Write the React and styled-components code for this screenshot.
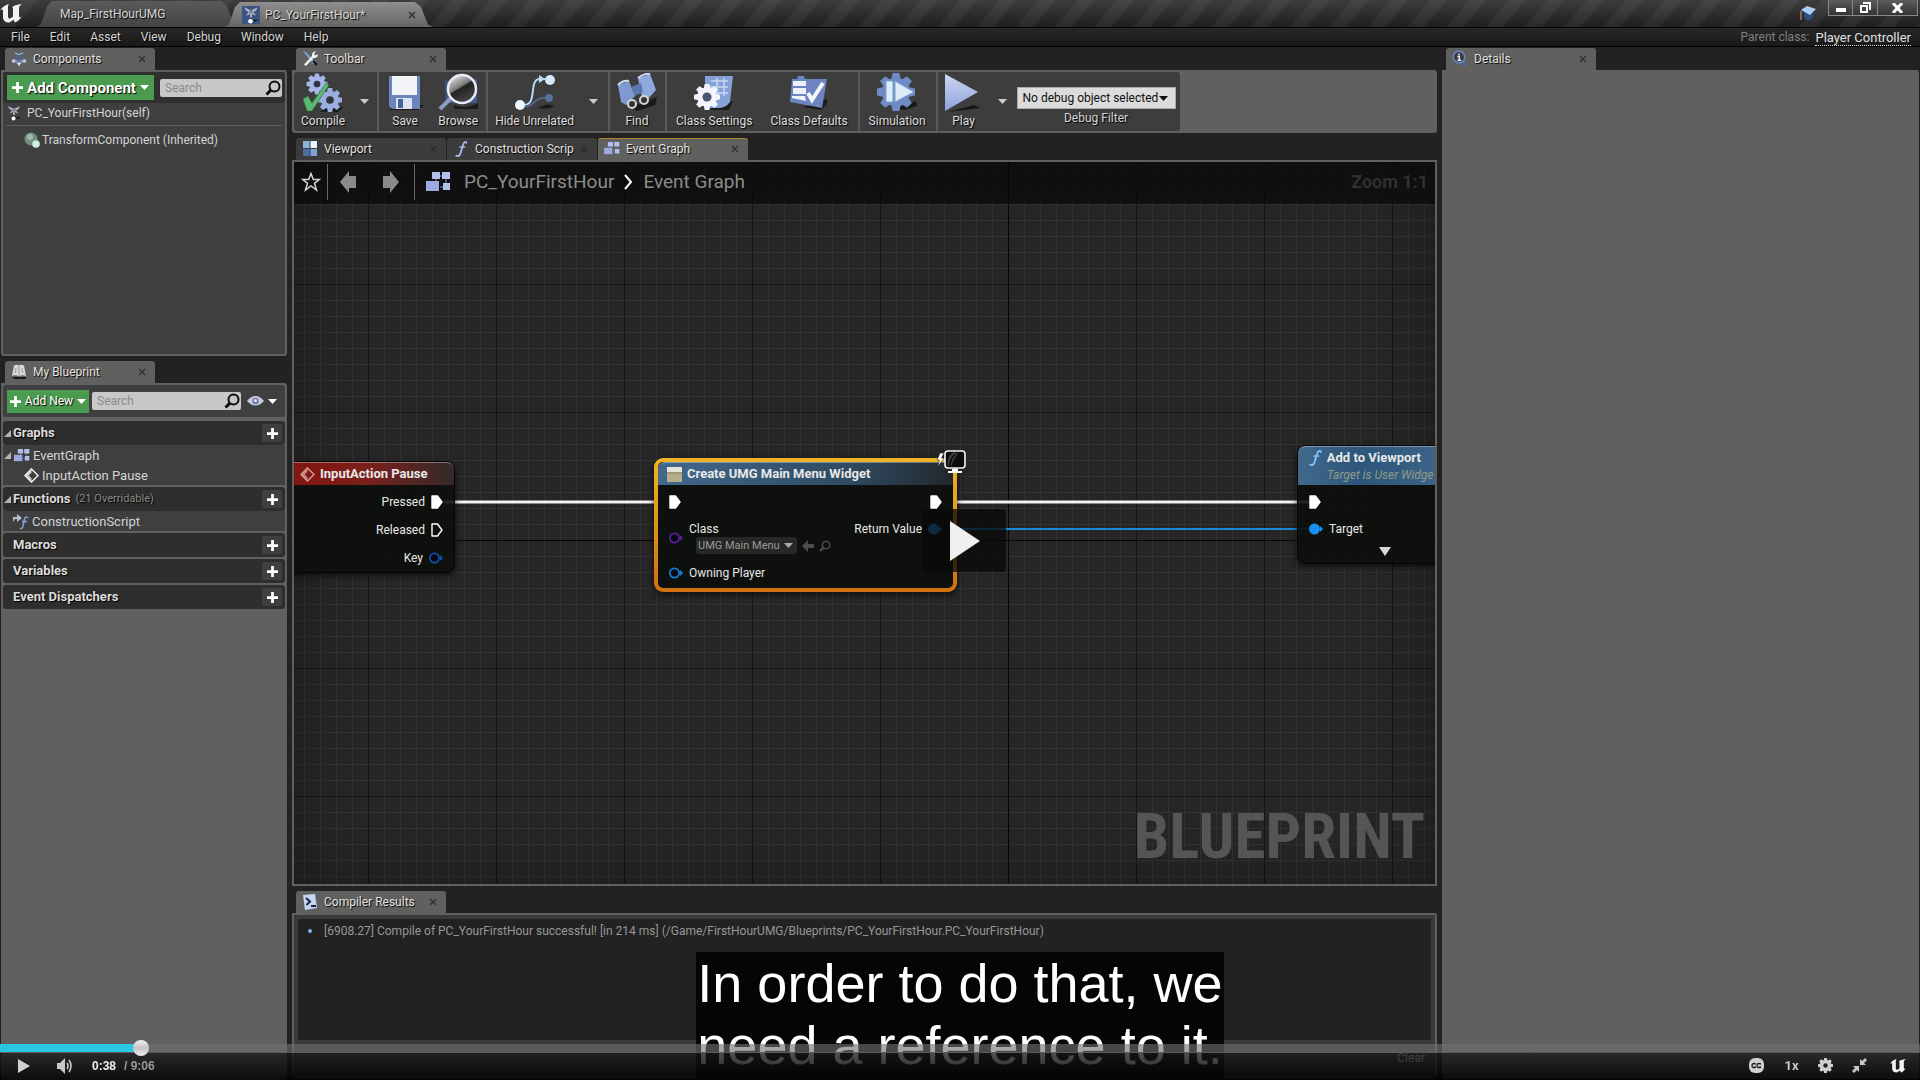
import React from "react";
import styled, { createGlobalStyle, css } from "styled-components";

const GlobalStyle = createGlobalStyle`
    * {
        box-sizing: border-box;
    }

    body {
        margin: 0;
        background: #222222;
        color: #d4d4d4;
        font-family: Roboto, "Liberation Sans", sans-serif;
        font-size: 12px;
        line-height: 16px;
        overflow: hidden;
    }

    button, input, select {
        font: inherit;
        color: inherit;
        border: none;
        padding: 0;
        background: none;
    }

    a {
        color: inherit;
    }

    svg {
        display: block;
        flex: none;
    }
`;

const Editor = styled.div`
    display: flex;
    flex-direction: column;
    height: 100vh;
`;

/* title bar */

const TitleBar = styled.header`
    display: flex;
    justify-content: space-between;
    height: 27px;
    background:
        linear-gradient(rgba(90,90,90,0.45), rgba(20,20,20,0.35)),
        repeating-linear-gradient(130deg, #242424 0 14px, #353535 17px 27px, #242424 30px);
`;

const WindowTabs = styled.nav`
    display: flex;
    align-items: flex-end;
`;

const Logo = styled.div`
    width: 37px;
    padding-bottom: 4px;
`;

const WindowTab = styled.div`
    display: flex;
    align-items: center;
    width: ${props => props.$active ? "208px" : "202px"};
    height: ${props => props.$active ? "25px" : "26px"};
    margin-left: ${props => props.$active ? "-14px" : "0"};
    padding: 0 17px 0 ${props => props.$active ? "17px" : "23px"};
    gap: 5px;
    color: #d6d6d6;
    text-shadow: 1px 1px 1px #000;
    background: ${props => props.$active
        ? "linear-gradient(#8e8e8e, #666664)"
        : "linear-gradient(#5a5a5a, #444)"};
    clip-path: polygon(0 100%, 4px 90%, 10px 20%, 15px 0, calc(100% - 18px) 0, calc(100% - 12px) 20%, calc(100% - 5px) 90%, 100% 100%);
`;

const WindowButtons = styled.div`
    display: flex;
    align-items: flex-start;
    margin-right: 2px;
`;

const Tutorial = styled.div`
    padding: 6px 12px 0 0;
`;

const WindowButton = styled.button`
    display: flex;
    align-items: center;
    justify-content: center;
    width: ${props => props.$wide ? "40px" : "25px"};
    height: 16px;
    background: linear-gradient(#5c5c5c, #333);
    border: 1px solid #8a8a8a;
    border-top: none;
    border-left-width: ${props => props.$first ? "1px" : "0"};
`;

const MenuBar = styled.nav`
    display: flex;
    align-items: center;
    height: 20px;
    padding: 0 9px 0 11px;
    border-top: 1px solid #000;
    border-bottom: 1px solid #000;
    background: linear-gradient(#272727, #191919);
    gap: 20px;
`;

const MenuItem = styled.button`
    text-shadow: 1px 1px 1px #000;
`;

const ParentClass = styled.div`
    display: flex;
    gap: 6px;
    margin-left: auto;
    color: #808080;

    a {
        color: #e0e0e0;
        text-decoration: none;
        border-bottom: 1px dotted #e0e0e0;
        font-size: 13px;
        line-height: 14px;
        margin-top: 2px;
    }
`;

/* docking layout */

const Workspace = styled.main`
    display: grid;
    grid-template-columns: 15% minmax(0, 1fr) 25%;
    flex: 1;
    min-height: 0;
`;

const Column = styled.div`
    display: flex;
    flex-direction: column;
    gap: 5px;
    min-height: 0;
    padding: ${props => props.$padding};
`;

const Dock = styled.section`
    display: flex;
    flex-direction: column;
    min-height: 0;
    flex: ${props => props.$grow ? "1" : "none"};
`;

const TabStrip = styled.div`
    display: flex;
    gap: 1px;
    height: ${props => props.$tall ? "23px" : "22px"};
    align-items: flex-end;
    padding-left: 4px;
`;

const Tab = styled.div`
    display: flex;
    align-items: center;
    width: 150px;
    height: 22px;
    padding: 0 9px 2px 6px;
    color: #e2e2e2;
    text-shadow: 1px 1px 1px #000;
    border-radius: 3px 3px 0 0;
    background: ${props => props.$idle ? "#3c3c3c" : "#60605e"};
    border-top: 1px solid ${props => props.$focused ? "#a8842c" : "transparent"};
    white-space: nowrap;
`;

const TabLabel = styled.span`
    flex: 1;
`;

const TabIcon = styled.span`
    display: flex;
    justify-content: center;
    width: 16px;
    margin-right: 6px;
`;

const Panel = styled.div`
    display: flex;
    flex-direction: column;
    flex: 1;
    min-height: ${props => props.$minHeight || "0"};
    background: ${props => props.$fill || "#60605e"};
    border: 2px solid #60605e;
    border-radius: 0 3px 3px 3px;
`;

const FilterBar = styled.div`
    display: flex;
    align-items: center;
    height: ${props => props.$height};
    gap: ${props => props.$gap};
    padding: 0 3px 0 4px;
    background: ${props => props.$fill};
    border-radius: 3px;
`;

const AddButton = styled.button`
    display: flex;
    align-items: center;
    justify-content: center;
    gap: 4px;
    flex: none;
    color: #fff;
    background: #4a9a50;
    text-shadow: 1px 1px 1px #000;
    ${props => props.$large ? css`
        width: 147px;
        height: 25px;
        font-size: 15px;
        font-weight: bold;
    ` : css`
        width: 82px;
        height: 23px;
    `}
`;

const SearchBox = styled.label`
    display: flex;
    align-items: center;
    flex: 1;
    min-width: 0;
    height: 18px;
    padding: 0 1px 0 5px;
    background: #c8c8c8;
    border-radius: 2px;

    input {
        flex: 1;
        min-width: 0;
        color: #222;
        outline: none;
    }

    input::placeholder {
        color: #8a8a8a;
        opacity: 1;
    }
`;

const ViewOptions = styled.button`
    display: flex;
    align-items: center;
    gap: 4px;
    width: 38px;
    padding-left: 3px;
`;

const ComponentRow = styled.div`
    display: flex;
    align-items: center;
    gap: ${props => props.$child ? "2px" : "5px"};
    height: ${props => props.$child ? "28px" : "23px"};
    margin: 0 3px;
    padding-left: ${props => props.$child ? "18px" : "0"};
    padding-bottom: ${props => props.$child ? "0" : "3px"};
    border-bottom: ${props => props.$child ? "none" : "1px solid #60605e"};
`;

const Sections = styled.div`
    display: flex;
    flex-direction: column;
    gap: 2px;
    padding-top: 4px;
    font-size: 13px;
`;

const SectionHead = styled.div`
    display: flex;
    align-items: center;
    height: 24px;
    padding-right: 3px;
    background: #2e2e2e;
    border-radius: 3px;
    text-shadow: 1px 1px 1px #000;
`;

const Expander = styled.span`
    display: flex;
    width: 10px;
    padding-left: 1px;
`;

const SectionName = styled.span`
    font-weight: bold;
    color: #dcdcdc;
`;

const SectionHint = styled.span`
    margin-left: 5px;
    font-size: 11px;
    color: #8a8a8a;
`;

const PlusButton = styled.button`
    display: flex;
    align-items: center;
    justify-content: center;
    width: 20px;
    height: 18px;
    margin-left: auto;
    background: #404040;
    border-radius: 2px;
`;

const TreeRow = styled.div`
    display: flex;
    align-items: center;
    gap: 3px;
    height: 20px;
    padding: 1px 0 0 ${props => props.$indent};
    background: #3f3f3f;
`;

/* toolbar */

const ToolbarArea = styled.div`
    display: flex;
    padding: 2px;
    background: #60605e;
    border-radius: 0 3px 3px 3px;
`;

const Toolbar = styled.div`
    display: flex;
    height: 59px;
    background: #3d3d3d;
    border-radius: 3px;
`;

const ToolGroup = styled.div`
    display: flex;
    align-items: stretch;
    gap: ${props => props.$roomy ? "4px" : "0"};
    padding: ${props => props.$roomy ? "0 3px 0 2px" : "0 1px 0 0"};
    border-right: ${props => props.$last ? "none" : "2px solid #5a5a58"};
`;

const ToolButton = styled.button`
    display: flex;
    flex-direction: column;
    align-items: center;
    justify-content: space-between;
    min-width: 52px;
    padding: 1px 7px 2px;
    color: #dedede;
    text-shadow: 1px 1px 1px #000;
    white-space: nowrap;
`;

const ToolArrow = styled.button`
    display: flex;
    align-items: center;
    justify-content: center;
    width: ${props => props.$narrow ? "24px" : "26px"};
`;

const DebugFilter = styled.div`
    display: flex;
    flex-direction: column;
    align-items: center;
    padding: 15px 4px 0 0;
    text-shadow: 1px 1px 1px #000;
`;

const SelectWrap = styled.div`
    position: relative;
    margin-bottom: 1px;

    select {
        appearance: none;
        width: 159px;
        height: 22px;
        padding-left: 5px;
        color: #111;
        background: #dcdcdc;
        border: 1px solid #aaa;
        text-shadow: none;
    }

    svg {
        position: absolute;
        right: 8px;
        top: 9px;
        pointer-events: none;
    }
`;

/* graph */

const GraphPanel = styled.div`
    position: relative;
    flex: 1;
    min-height: 0;
    overflow: hidden;
    border: 2px solid #60605e;
    background-color: #262626;
    background-image:
        linear-gradient(#060606, #060606),
        linear-gradient(#060606, #060606),
        linear-gradient(90deg, #161616 1px, transparent 1px),
        linear-gradient(#161616 1px, transparent 1px),
        linear-gradient(90deg, #323232 1px, transparent 1px),
        linear-gradient(#323232 1px, transparent 1px);
    background-size: 1px 100%, 100% 1px, 128px 128px, 128px 128px, 16px 16px, 16px 16px;
    background-position: 714px 0, 0 378px, 74px 0, 0 122px, 10px 0, 0 10px;
    background-repeat: no-repeat, no-repeat, repeat, repeat, repeat, repeat;
    box-shadow: inset 0 0 60px rgba(0,0,0,0.35);
`;

const GraphHeader = styled.div`
    position: relative;
    z-index: 2;
    display: flex;
    align-items: center;
    height: 42px;
    padding: 0 7px 2px 7px;
    background: rgba(8,8,8,0.72);
    color: #8c8c8c;
    font-size: 19px;
    line-height: 22px;
`;

const HeaderButton = styled.button`
    display: flex;
    align-items: center;
    justify-content: center;
    width: ${props => props.$width};
    height: 36px;
`;

const HeaderRule = styled.span`
    width: 1px;
    height: 36px;
    margin-left: ${props => props.$gap || "0"};
    background: #6a6a6a;
`;

const Crumbs = styled.div`
    display: flex;
    align-items: center;
    gap: 10px;
    padding-left: 11px;

    svg:first-child {
        margin-right: 3px;
    }
`;

const ZoomLevel = styled.span`
    margin-left: auto;
    font-size: 18px;
    font-weight: bold;
    color: #303030;
`;

const Watermark = styled.div`
    position: absolute;
    right: 10px;
    bottom: 14px;
    color: #555553;
    font-family: "Roboto Condensed", "Liberation Sans Narrow", Roboto, sans-serif;
    font-size: 63px;
    font-weight: bold;
    line-height: 66px;
`;

const Wires = styled.svg`
    position: absolute;
    left: 0;
    top: 0;
`;

const Node = styled.div`
    position: absolute;
    left: ${props => props.$x}px;
    top: ${props => props.$y}px;
    width: ${props => props.$w}px;
    height: ${props => props.$h}px;
    border: 1px solid #050505;
    border-radius: 8px;
    background: rgba(12,14,12,0.9);
    box-shadow: 0 2px 6px rgba(0,0,0,0.7);
    color: #e8e8e8;
    ${props => props.$selected && css`
        background:
            linear-gradient(#0e100e, #0e100e) padding-box,
            linear-gradient(#f0b428, #d0700e) border-box;
        border: 4px solid transparent;
        border-radius: 9px;
    `}
`;

const headColors = {
    red: "linear-gradient(90deg, #821712 0 35%, #7a201c 60%, #332a29)",
    blue: "linear-gradient(90deg, #41698c, #2f4a62 65%, #22272b)",
    steel: "linear-gradient(90deg, #41698c, #2c567a 35%, #41698c)",
};

const NodeHead = styled.div`
    display: flex;
    align-items: ${props => props.$tall ? "flex-start" : "center"};
    gap: 5px;
    height: ${props => props.$tall ? "39px" : "23px"};
    padding: ${props => props.$padding};
    border-radius: 7px 7px 0 0;
    border-top: 1px solid rgba(255,255,255,0.35);
    background: ${props => headColors[props.$tone]};
    font-size: 13px;
    font-weight: bold;
    white-space: nowrap;

    small {
        display: block;
        font-size: 12px;
        font-weight: normal;
        font-style: italic;
        line-height: 18px;
        color: #8f9a86;
    }
`;

const NodeBody = styled.div`
    display: flex;
    justify-content: space-between;
    padding: ${props => props.$padding};
`;

const Pins = styled.div`
    display: flex;
    flex-direction: column;
    gap: ${props => props.$gap || "0"};
    align-items: ${props => props.$out ? "flex-end" : "flex-start"};
`;

const Pin = styled.div`
    display: flex;
    align-items: center;
    gap: 6px;
    height: ${props => props.$height || "16px"};
    white-space: nowrap;
`;

const ClassValue = styled.div`
    display: flex;
    align-items: center;
    gap: 5px;
    padding-left: 7px;
    font-size: 11px;
    line-height: 14px;

    button {
        display: flex;
        align-items: center;
        gap: 4px;
        height: 17px;
        padding: 0 4px 0 2px;
        color: #9a9a9a;
        background: #262826;
        border-radius: 3px;
    }
`;

const LatentBadge = styled.div`
    position: absolute;
    right: -13px;
    top: -12px;
`;

const MoreArrow = styled.div`
    display: flex;
    justify-content: center;
    padding-top: 10px;
`;

/* compiler results */

const Log = styled.div`
    flex: 1;
    margin: 4px 4px 0;
    padding: 4px 10px;
    background: #222222;
    color: #979797;
`;

const LogLine = styled.div`
    display: flex;
    align-items: center;
    gap: 12px;

    &::before {
        content: "";
        width: 4px;
        height: 4px;
        border-radius: 50%;
        background: #7cb8ea;
    }
`;

const LogFooter = styled.div`
    display: flex;
    justify-content: flex-end;
    padding: 10px 10px;
`;

/* video player */

const BigPlay = styled.button`
    position: fixed;
    left: 48%;
    top: 509px;
    z-index: 5;
    display: flex;
    align-items: center;
    width: 84px;
    height: 63px;
    padding-left: 28px;
    border-radius: 4px;
    background: rgba(8,8,8,0.75);
`;

const Captions = styled.div`
    position: fixed;
    left: 0;
    right: 0;
    bottom: 2px;
    z-index: 4;
    display: flex;
    justify-content: center;

    p {
        margin: 0;
        padding: 0 1px 2px;
        background: rgba(0,0,0,0.85);
        color: #fff;
        font-family: "Liberation Sans", Arial, sans-serif;
        font-size: 54px;
        line-height: 62px;
    }
`;

const Player = styled.div`
    position: fixed;
    left: 0;
    right: 0;
    bottom: 0;
    z-index: 6;
`;

const Seek = styled.input`
    appearance: none;
    display: block;
    width: 100%;
    height: 8px;
    margin: 0;
    background: linear-gradient(90deg, #2cc5e2 ${props => props.$played}%, rgba(112,112,112,0.61) ${props => props.$played}%);

    &::-webkit-slider-thumb {
        appearance: none;
        width: 16px;
        height: 16px;
        border-radius: 50%;
        background: linear-gradient(#f4f4f4, #c4c4c4 50%, #f0f0f0);
    }
`;

const Controls = styled.div`
    display: flex;
    align-items: center;
    height: 28px;
    padding: 0 14px 2px 16px;
    border-top: 1px solid #5c5c5c;
    background: linear-gradient(rgba(24,24,24,0.76), rgba(0,0,0,0.88));
    color: #c8c8c8;
    font-family: "Liberation Sans", Arial, sans-serif;
    font-weight: bold;
`;

const ControlGroup = styled.div`
    display: flex;
    align-items: center;
    gap: ${props => props.$gap};
    margin-left: ${props => props.$end ? "auto" : "0"};
`;

const Control = styled.button`
    display: flex;
    align-items: center;
    justify-content: center;
    min-width: 15px;
    padding-left: ${props => props.$apart ? "4px" : "0"};
    font-size: ${props => props.$text ? "13px" : "inherit"};
    font-family: Roboto, sans-serif;
`;

const Time = styled.div`
    display: flex;
    gap: 8px;
    padding-left: 19px;
    color: #9a9a9a;

    strong {
        color: #f0f0f0;
    }
`;

/* icons */

const Caret = ({ color = "#fff", size = 9 }) => (
    <svg width={size} height="5" viewBox="0 0 9 5"><path d="M0 0h9L4.500 5z" fill={color}/></svg>
);

const Plus = ({ size = 11 }) => (
    <svg width={size} height={size} viewBox="0 0 12 12"><path d="M4.500 0h3v4.500H12v3H7.500V12h-3V7.500H0v-3h4.500z" fill="#fff"/></svg>
);

const Close = () => (
    <svg width="8" height="8" viewBox="0 0 8 8"><path d="M1 1l6 6M7 1L1 7" stroke="#2e2e2e" strokeWidth="1.300"/></svg>
);

const Lens = ({ size = 16, color = "#0c0c0c" }) => (
    <svg width={size} height={size} viewBox="0 0 16 16" fill="none" stroke={color}>
        <circle cx="9.500" cy="6.500" r="5" strokeWidth="2"/><path d="M6 10l-4.500 4.500" strokeWidth="3"/>
    </svg>
);

const UnrealMark = ({ width = 22, height = 19 }) => (
    <svg width={width} height={height} viewBox="0 0 22 19">
        <path d="M0 7C2 3 5 1 9 0C8 1.500 8 2 8 3V12.500C8 14 9 15 10 14.500L13 12.800V4.500C13 3.500 12.600 3 11.500 3.600C13.500 1.500 17 .7 22 0C20 1.500 19 2.500 19 4V12C19 13.500 20 13.600 21.500 12.500C20 15.500 17.500 17.500 15 18.500L13.500 15.800L9.500 18.500C5 18.500 3 16.500 3 13V6.500C3 5 1.500 5.600 0 7Z" fill="#f2f2f2"/>
    </svg>
);

const ControllerIcon = ({ size = 14, tile }) => (
    <svg width={size} height={size} viewBox="0 0 16 16">
        {tile && <rect width="16" height="16" fill="#3b5483"/>}
        <path d="M2 1l5 2.500h2L14 1l-1.500 3L10 5.500l2.500 3-1-.3L8.800 7v3H7.200V7L4.500 8.200l-1 .3 2.500-3L3.500 4z" fill="#b4bac6"/>
        <circle cx="8" cy="5" r="1.800" fill="#7c8494"/>
        <circle cx="7.500" cy="13.500" r="2" fill="#fff"/><path d="M10 12l5 .5-4 1.500z" fill="#111"/>
    </svg>
);

const ComponentsIcon = () => (
    <svg width="16" height="16" viewBox="0 0 16 16">
        <ellipse cx="8" cy="10" rx="7" ry="2.500" fill="#7c88ac"/>
        <path d="M4 2l4-1 4 1v6l-4 2-4-2z" fill="#56617f"/><path d="M4 2l4 1.500L12 2" stroke="#b8c4e4" fill="none"/>
        <circle cx="2.500" cy="10" r="1.800" fill="#c4cbe0"/><circle cx="13.500" cy="10" r="1.800" fill="#c4cbe0"/><path d="M6 12h4l-2 3z" fill="#eee"/>
    </svg>
);

const BookIcon = () => (
    <svg width="16" height="15" viewBox="0 0 16 15">
        <path d="M1 12L3 1.500Q6 0 8 1.500Q10 0 13 1.500L15 12Q11 10.500 8 12.500Q5 10.500 1 12z" fill="#d8d8d8"/>
        <path d="M8 2v10M5 4L4.500 9M11 4l.5 5" stroke="#999" fill="none"/><path d="M1 13h14v2H3z" fill="#1a1a1a"/>
    </svg>
);

const WrenchIcon = () => (
    <svg width="17" height="17" viewBox="0 0 17 17">
        <path d="M1 1l3 1 9 10-2 2z" fill="#7f9ee0"/>
        <path d="M2 14.500L10 6c-.5-3 1.500-5 4-4.500L12 4l1.500 1.500L16 4c0 3-2 4.500-4.500 4L4 16z" fill="#f2f2f2"/>
        <path d="M11 11l4 4" stroke="#111" strokeWidth="2"/>
    </svg>
);

const DetailsIcon = () => (
    <svg width="16" height="17" viewBox="0 0 16 17">
        <path d="M10 11l4 5" stroke="#4a69b4" strokeWidth="2.500"/>
        <circle cx="7" cy="7" r="5.800" fill="#3c3e46" stroke="#6c86c4" strokeWidth="1.500"/>
        <path d="M7 3.500v1.800M5.500 6.500H7.300V10M5.500 10.300h3.500" stroke="#f4f4f4" strokeWidth="1.400" fill="none"/>
    </svg>
);

const ViewportIcon = () => (
    <svg width="14" height="15" viewBox="0 0 14 15">
        <path d="M0 0h6.500v7H0z" fill="#8fb4dc"/><path d="M7.500 0H14v7H7.500z" fill="#e8f2fc"/>
        <path d="M0 8h6.500v7H0z" fill="#4a6ea4"/><path d="M7.500 8H14v7H7.500z" fill="#7da2d4"/>
    </svg>
);

const GraphIcon = ({ width = 16 }) => (
    <svg width={width} height={width * 0.8} viewBox="0 0 25 20">
        <path d="M12 4h6M14 15h4M10 4v6M20 5v8" stroke="#5d688c" strokeWidth="1.500"/>
        <path d="M6 0h8v7H6zM16 0h8v7h-8zM17 11h7v7h-7z" fill="#b4c0ec"/><path d="M0 9h13v10H0z" fill="#9caae0"/>
    </svg>
);

const ConsoleIcon = () => (
    <svg width="15" height="16" viewBox="0 0 15 16">
        <path d="M0 1l12-1 2 14-12 2z" fill="#c8d6f6"/><path d="M3 4l4 3.500L3.500 11M8 12h5" stroke="#1c2438" strokeWidth="2" fill="none"/>
    </svg>
);

const FunctionIcon = ({ size = 16, color = "#a9b8ee" }) => (
    <svg width={size * 0.8} height={size} viewBox="0 0 13 16" fill="none" stroke={color}>
        <path d="M12.500 2.500C11.500 0 9 .5 8.300 3.500L5.500 12.500C4.700 15.500 2 16 .8 14" strokeWidth="1.900"/><path d="M4.500 6h6" strokeWidth="1.500"/>
    </svg>
);

const ConstructionIcon = () => (
    <svg width="17" height="16" viewBox="0 0 17 16" fill="none">
        <path d="M1 8V3h4V0l5 4-5 4V5H3z" fill="#b6bed4"/>
        <path d="M16 4c-1-2-3-1-3.500 1L11 12c-.5 2.500-2 3-3 2M10 7.500h5" stroke="#8c9cd8" strokeWidth="1.500"/>
    </svg>
);

const EventIcon = ({ color = "#f0f0f0", size = 15 }) => (
    <svg width={size} height={size} viewBox="0 0 16 16" fill="none">
        <path d="M8 1l7 7-7 7-7-7z" stroke={color} strokeWidth="1.600"/><path d="M8 1L1 8l7 7v-4L5 8l3-3z" fill={color} opacity=".8"/>
    </svg>
);

const TransformIcon = () => (
    <svg width="16" height="16" viewBox="0 0 16 16">
        <circle cx="7" cy="7" r="6.500" fill="#6f8f7e"/><circle cx="6" cy="5" r="3" fill="#a4b8ac"/><circle cx="12" cy="12" r="3.800" fill="#c9f2dc"/>
    </svg>
);

const EyeIcon = () => (
    <svg width="17" height="12" viewBox="0 0 17 12">
        <path d="M0 6Q8.500-4 17 6Q8.500 15 0 6z" fill="#c8ccda"/><circle cx="8.500" cy="6" r="3.200" fill="#6a7cae"/><circle cx="8.500" cy="5.500" r="1.500" fill="#e6eaf8"/>
    </svg>
);

const TriangleOpen = () => (
    <svg width="7" height="7" viewBox="0 0 7 7"><path d="M7 0v7H0z" fill="#b4b4b4"/></svg>
);

/* eight toothed wheel round 0,0 */
const teeth = [0, 45, 90, 135, 180, 225, 270, 315];

const Gear = ({ x = 0, y = 0, r = 10, fill, hole, holeFill }) => (
    <g transform={`translate(${x} ${y}) scale(${r / 10})`}>
        <circle r="7.500" fill={fill}/>
        {teeth.map(turn => (
            <path key={turn} transform={`rotate(${turn})`} d="M-2.600-6l.8-4h3.600l.8 4z" fill={fill}/>
        ))}
        <circle r={hole} fill={holeFill}/>
    </g>
);

const CompileIcon = () => (
    <svg width="42" height="40" viewBox="0 0 42 40">
        <path d="M22 36l20-2-6 5H18z" fill="#1c1c1c"/>
        <Gear x={15} y={11} r={10.5} fill="#a6b6e6" hole="3.200" holeFill="#30343e"/>
        <Gear x={28} y={27} r={12} fill="#9cade0" hole="3.200" holeFill="#30343e"/>
        <path d="M1 26l5-3 4 7L24 10l3 2L10 38H5z" fill="#5cb870" stroke="#2b6a3c" strokeWidth=".6"/>
    </svg>
);

const SaveIcon = () => (
    <svg width="38" height="38" viewBox="0 0 38 38">
        <path d="M6 34l32-2-6 5H4z" fill="#161616"/>
        <path d="M3 3h31v33H6l-3-3z" fill="#6b84bc"/><path d="M6 3h25v19H6z" fill="#f2f4f8"/>
        <path d="M10 25h16v11H10z" fill="#dbe2f0"/><path d="M12 26h5v9h-5z" fill="#4a629a"/>
    </svg>
);

const BrowseIcon = () => (
    <svg width="40" height="38" viewBox="0 0 40 38">
        <defs><linearGradient id="lens" x2=".6" y2="1"><stop offset="0" stopColor="#fff"/><stop offset=".5" stopColor="#777"/><stop offset=".55" stopColor="#222"/><stop offset="1" stopColor="#444"/></linearGradient></defs>
        <path d="M16 32q12 5 24-2v6H16z" fill="#1b1b1b"/><path d="M7 8l32-2v24H8z" fill="#40588e"/>
        <path d="M13 25L2 36" stroke="#8a9cc8" strokeWidth="4"/>
        <circle cx="24" cy="16" r="14" fill="url(#lens)" stroke="#e8ecf6" strokeWidth="2.500"/>
    </svg>
);

const HideIcon = () => (
    <svg width="42" height="38" viewBox="0 0 42 38">
        <path d="M24 35q10-6 16-2-4 4-16 2z" fill="#1a1a1a"/>
        <path d="M6 32h4c14 0 4-26 16-26h5" stroke="#b8dcf4" strokeWidth="2" fill="none"/><path d="M25 2l6 4-6 4z" fill="#b8dcf4"/>
        <path d="M8 33c14 2 10-9 24-8" stroke="#566886" strokeWidth="2" fill="none"/>
        <circle cx="6" cy="32" r="5" fill="#eef6fe"/><circle cx="36" cy="7" r="5" fill="#d4eafa"/><circle cx="35" cy="25" r="4" fill="#54729c"/>
    </svg>
);

const FindIcon = () => (
    <svg width="40" height="38" viewBox="0 0 40 38">
        <path d="M14 34l26-10-2 8-18 6z" fill="#1b1b1b"/>
        <path d="M1 12l11-4 6 15-9 9-5-3z" fill="#7f9ad2"/><path d="M21 5l12-4 6 16-9 10-5-2z" fill="#8fa8de"/>
        <path d="M14 14l10-4 2 9-8 4z" fill="#5c76ae"/><path d="M1 12q5-5 11-4M21 5q6-5 12-4" stroke="#d4def6" strokeWidth="2" fill="none"/>
        <circle cx="15" cy="31" r="4" fill="#333" stroke="#d8d8d8" strokeWidth="2"/><circle cx="27" cy="27" r="4" fill="#333" stroke="#d8d8d8" strokeWidth="2"/>
    </svg>
);

const ClassSettingsIcon = () => (
    <svg width="42" height="38" viewBox="0 0 42 38">
        <path d="M18 34l22-6-4 9H18z" fill="#1b1b1b"/><path d="M12 3h28l-3 26q-4 6-12 6H12z" fill="#86a0d8"/>
        <path d="M18 8h17M17 14h18M24 20h11M24 5v18M31 5v18" stroke="#c8d6f4" strokeWidth="1.500"/>
        <Gear x={14} y={24} r={13} fill="#f2f5fa" hole="3.500" holeFill="#4a5674"/>
    </svg>
);

const ClassDefaultsIcon = () => (
    <svg width="40" height="38" viewBox="0 0 40 38">
        <path d="M14 34l24-8v5l-6 6z" fill="#1b1b1b"/><path d="M3 6h5l1-3h6l1 3h22l-5 29-32-6z" fill="#6c84c0"/>
        <path d="M4 8h13v5H4zM4 15h13v6H4zM3 23h13l1 5-14-3z" fill="#eef1f8"/>
        <path d="M19 20l4 7L34 10" stroke="#f4f6fa" strokeWidth="4" fill="none"/>
    </svg>
);

const SimulationIcon = () => (
    <svg width="42" height="38" viewBox="0 0 42 38">
        <path d="M18 36l22-8 1 5-12 4z" fill="#1b1b1b"/>
        <Gear x={20} y={19} r={19} fill="#6f8ac4" hole="0"/>
        <path d="M10 8h7v21h-7zM19 8l19 11-19 10z" fill="#dcecfa" stroke="#7fa0cc"/>
    </svg>
);

const PlayIcon = () => (
    <svg width="38" height="40" viewBox="0 0 38 40">
        <defs><linearGradient id="play" x2="0" y2="1"><stop offset="0" stopColor="#cdd6f2"/><stop offset="1" stopColor="#8ea4dc"/></linearGradient></defs>
        <path d="M3 39l32-4-6-3z" fill="#141414"/><path d="M0 1l33 18L0 38z" fill="url(#play)"/>
    </svg>
);

const ArrowIcon = ({ back }) => (
    <svg width="17" height="22" viewBox="0 0 17 22">
        <path d={back ? "M0 11L9 0v5h7v12H9v5z" : "M17 11L8 0v5H1v12h7v5z"} fill="#8a8a8a"/>
    </svg>
);

const ExecPin = ({ hollow }) => (
    <svg width="12" height="14" viewBox="0 0 12 14">
        <path d="M1 1h5.500L11 7l-4.500 6H1z" fill={hollow ? "none" : "#fff"} stroke="#fff" strokeWidth="1.400" strokeLinejoin="round"/>
    </svg>
);

const DataPin = ({ color, filled }) => (
    <svg width="14" height="12" viewBox="0 0 14 12">
        <circle cx="5.500" cy="6" r="4.600" fill={filled ? color : "#060a10"} stroke={color} strokeWidth="1.800"/><path d="M11 3l3 3-3 3z" fill={color}/>
    </svg>
);

const WidgetIcon = () => (
    <svg width="15" height="15" viewBox="0 0 15 15"><path d="M0 0h15v15H0z" fill="#b4ac8c"/><path d="M0 0h15v5H0z" fill="#e6e6dc"/><path d="M0 6h15" stroke="#888268"/></svg>
);

const MonitorIcon = () => (
    <svg width="30" height="25" viewBox="0 0 30 25">
        <path d="M4 3L1 10h2.500L1.500 17 8 8H5.500L8 3z" fill="#fff" stroke="#111" strokeWidth=".5"/>
        <rect x="9" y="1" width="20" height="17" rx="3" fill="#0c0c0c" stroke="#f4f4f4" strokeWidth="1.600"/>
        <path d="M12 16Q13 6 20 3h-3q-5 3-5 13zM15 16Q16 8 22 3" fill="#333" stroke="#444"/>
        <path d="M16 19h6v2h4v2H12v-2h4z" fill="#fff"/>
    </svg>
);

const HatIcon = () => (
    <svg width="16" height="15" viewBox="0 0 16 15">
        <path d="M4 6v6l5 3 4-4V5z" fill="#2f4f80"/><path d="M1 4l6-4 9 3-6 6z" fill="#a9cdf4"/><path d="M1 5v9" stroke="#e0a468"/>
    </svg>
);

/* pieces */

const DockTab = ({ icon, label, idle, focused }) => (
    <Tab $idle={idle} $focused={focused}>
        <TabIcon>{icon}</TabIcon>
        <TabLabel>{label}</TabLabel>
        <Close/>
    </Tab>
);

const Search = ({ name }) => (
    <SearchBox>
        <input type="text" aria-label={name} placeholder="Search"/>
        <Lens/>
    </SearchBox>
);

const Tool = ({ icon, label }) => (
    <ToolButton>{icon}<span>{label}</span></ToolButton>
);

const Section = ({ name, hint, open, children }) => (
    <div>
        <SectionHead>
            <Expander>{open && <TriangleOpen/>}</Expander>
            <SectionName>{name}</SectionName>
            {hint && <SectionHint>{hint}</SectionHint>}
            <PlusButton aria-label={"Add " + name}><Plus/></PlusButton>
        </SectionHead>
        {children}
    </div>
);

const LeftColumn = () => (
    <Column $padding="0 1px">
        <Dock>
            <TabStrip $tall><DockTab icon={<ComponentsIcon/>} label="Components"/></TabStrip>
            <Panel $fill="#3f3f3f" $minHeight="286px">
                <FilterBar $height="31px" $gap="6px" $fill="#303030">
                    <AddButton $large><Plus/>Add Component<Caret/></AddButton>
                    <Search name="Search components"/>
                </FilterBar>
                <ComponentRow><ControllerIcon size={16}/>PC_YourFirstHour(self)</ComponentRow>
                <ComponentRow $child><TransformIcon/>TransformComponent (Inherited)</ComponentRow>
            </Panel>
        </Dock>
        <Dock $grow>
            <TabStrip><DockTab icon={<BookIcon/>} label="My Blueprint"/></TabStrip>
            <Panel>
                <FilterBar $height="32px" $gap="3px" $fill="#3f3f3f">
                    <AddButton><Plus/>Add New<Caret/></AddButton>
                    <Search name="Search blueprint"/>
                    <ViewOptions aria-label="View options"><EyeIcon/><Caret/></ViewOptions>
                </FilterBar>
                <Sections>
                    <Section name="Graphs" open>
                        <TreeRow $indent="1px"><TriangleOpen/><GraphIcon/>EventGraph</TreeRow>
                        <TreeRow $indent="21px"><EventIcon/>InputAction Pause</TreeRow>
                    </Section>
                    <Section name="Functions" hint="(21 Overridable)" open>
                        <TreeRow $indent="9px"><ConstructionIcon/>ConstructionScript</TreeRow>
                    </Section>
                    <Section name="Macros"/>
                    <Section name="Variables"/>
                    <Section name="Event Dispatchers"/>
                </Sections>
            </Panel>
        </Dock>
    </Column>
);

const MainToolbar = () => (
    <ToolbarArea>
        <Toolbar>
            <ToolGroup>
                <Tool icon={<CompileIcon/>} label="Compile"/>
                <ToolArrow $narrow aria-label="Compile options"><Caret color="#ccc"/></ToolArrow>
            </ToolGroup>
            <ToolGroup>
                <Tool icon={<SaveIcon/>} label="Save"/>
                <Tool icon={<BrowseIcon/>} label="Browse"/>
            </ToolGroup>
            <ToolGroup>
                <Tool icon={<HideIcon/>} label="Hide Unrelated"/>
                <ToolArrow aria-label="Hide options"><Caret color="#ccc"/></ToolArrow>
            </ToolGroup>
            <ToolGroup>
                <Tool icon={<FindIcon/>} label="Find"/>
            </ToolGroup>
            <ToolGroup $roomy>
                <Tool icon={<ClassSettingsIcon/>} label="Class Settings"/>
                <Tool icon={<ClassDefaultsIcon/>} label="Class Defaults"/>
            </ToolGroup>
            <ToolGroup $roomy>
                <Tool icon={<SimulationIcon/>} label="Simulation"/>
            </ToolGroup>
            <ToolGroup $last>
                <Tool icon={<PlayIcon/>} label="Play"/>
                <ToolArrow aria-label="Play options"><Caret color="#ccc"/></ToolArrow>
            </ToolGroup>
            <DebugFilter>
                <SelectWrap>
                    <select id="debug-filter"><option>No debug object selected</option></select>
                    <Caret color="#111"/>
                </SelectWrap>
                <label htmlFor="debug-filter">Debug Filter</label>
            </DebugFilter>
        </Toolbar>
    </ToolbarArea>
);

const Graph = () => (
    <GraphPanel>
        <Watermark>BLUEPRINT</Watermark>
        <Wires width="1180" height="420">
            <path d="M150 340H1020" stroke="#f4f0f4" strokeWidth="3"/>
            <path d="M640 367H1020" stroke="#1a8ad4" strokeWidth="2"/>
        </Wires>
        <Node $x={-60} $y={299} $w={221} $h={112}>
            <NodeHead $tone="red" $padding="0 8px 0 65px"><EventIcon color="#d49a96"/>InputAction Pause</NodeHead>
            <NodeBody $padding="9px 11px 0 0">
                <span/>
                <Pins $out $gap="12px">
                    <Pin>Pressed<ExecPin/></Pin>
                    <Pin>Released<ExecPin hollow/></Pin>
                    <Pin>Key<DataPin color="#0f4fb0"/></Pin>
                </Pins>
            </NodeBody>
        </Node>
        <Node $x={360} $y={296} $w={303} $h={134} $selected>
            <NodeHead $tone="blue" $padding="0 9px"><WidgetIcon/>Create UMG Main Menu Widget</NodeHead>
            <NodeBody $padding="9px 11px 0">
                <Pins>
                    <Pin><ExecPin/></Pin>
                    <Pin $height="55px">
                        <DataPin color="#5a1ea0"/>
                        <div>
                            Class
                            <ClassValue>
                                <button>UMG Main Menu<Caret color="#aaa"/></button>
                                <svg width="12" height="12" viewBox="0 0 12 12"><path d="M0 6l6-6v4h6v4H6v4z" fill="#4c4c4c"/></svg>
                                <Lens size={12} color="#4c4c4c"/>
                            </ClassValue>
                        </div>
                    </Pin>
                    <Pin><DataPin color="#1482d0"/>Owning Player</Pin>
                </Pins>
                <Pins $out $gap="11px">
                    <Pin><ExecPin/></Pin>
                    <Pin>Return Value<DataPin color="#1590e8" filled/></Pin>
                </Pins>
            </NodeBody>
            <LatentBadge><MonitorIcon/></LatentBadge>
        </Node>
        <Node $x={1003} $y={283} $w={176} $h={119}>
            <NodeHead $tone="steel" $tall $padding="3px 8px 0 11px">
                <FunctionIcon color="#7cc4fc"/>
                <div>Add to Viewport<small>Target is User Widge</small></div>
            </NodeHead>
            <NodeBody $padding="9px 11px 0">
                <Pins $gap="11px">
                    <Pin><ExecPin/></Pin>
                    <Pin><DataPin color="#1590f0" filled/>Target</Pin>
                </Pins>
            </NodeBody>
            <MoreArrow><svg width="12" height="9" viewBox="0 0 12 9"><path d="M0 0h12L6 9z" fill="#d8d8d8"/></svg></MoreArrow>
        </Node>
        <GraphHeader>
            <HeaderButton $width="20px" aria-label="Favourite">
                <svg width="20" height="20" viewBox="0 0 20 20"><path d="M10 1.500l2.300 6h6l-4.800 3.800L15.500 18 10 14l-5.500 4 2-6.700L1.700 7.500h6z" fill="none" stroke="#d4d4d4" strokeWidth="1.500"/></svg>
            </HeaderButton>
            <HeaderRule $gap="6px"/>
            <HeaderButton $width="41px" aria-label="Back"><ArrowIcon back/></HeaderButton>
            <HeaderButton $width="43px" aria-label="Forward"><ArrowIcon/></HeaderButton>
            <HeaderRule $gap="2px"/>
            <Crumbs>
                <GraphIcon width={25}/>
                <span>PC_YourFirstHour</span>
                <svg width="9" height="16" viewBox="0 0 9 16"><path d="M1 1l6 7-6 7" stroke="#fff" strokeWidth="2" fill="none"/></svg>
                <span>Event Graph</span>
            </Crumbs>
            <ZoomLevel>Zoom 1:1</ZoomLevel>
        </GraphHeader>
    </GraphPanel>
);

const CenterColumn = () => (
    <Column $padding="0 3px 2px 4px">
        <Dock>
            <TabStrip $tall><DockTab icon={<WrenchIcon/>} label="Toolbar"/></TabStrip>
            <MainToolbar/>
        </Dock>
        <Dock $grow>
            <TabStrip>
                <DockTab icon={<ViewportIcon/>} label="Viewport" idle/>
                <DockTab icon={<FunctionIcon/>} label="Construction Scrip" idle/>
                <DockTab icon={<GraphIcon/>} label="Event Graph" focused/>
            </TabStrip>
            <Graph/>
        </Dock>
        <Dock>
            <TabStrip><DockTab icon={<ConsoleIcon/>} label="Compiler Results"/></TabStrip>
            <Panel $fill="#3a3a3a" $minHeight="165px">
                <Log>
                    <LogLine>[6908.27] Compile of PC_YourFirstHour successful! [in 214 ms] (/Game/FirstHourUMG/Blueprints/PC_YourFirstHour.PC_YourFirstHour)</LogLine>
                </Log>
                <LogFooter><button>Clear</button></LogFooter>
            </Panel>
        </Dock>
    </Column>
);

const VideoPlayer = () => {
    const [time, setTime] = React.useState(38);
    return (
        <Player>
            <Seek type="range" aria-label="Seek" min="0" max="546" value={time} $played={time / 5.46} onChange={e => setTime(Number(e.target.value))}/>
            <Controls>
                <ControlGroup $gap="26px">
                    <Control aria-label="Play"><svg width="12" height="14" viewBox="0 0 12 14"><path d="M0 0l12 7-12 7z" fill="#d0d0d0"/></svg></Control>
                    <Control aria-label="Volume">
                        <svg width="16" height="16" viewBox="0 0 16 16"><path d="M0 5h3l5-5v16l-5-5H0z" fill="#c8c8c8"/><path d="M10 5q2 3 0 6M12 2q4 6 0 12" stroke="#c8c8c8" strokeWidth="1.600" fill="none"/></svg>
                    </Control>
                </ControlGroup>
                <Time><strong>0:38</strong><span>/ 9:06</span></Time>
                <ControlGroup $end $gap="19px">
                    <Control aria-label="Captions">
                        <svg width="16" height="16" viewBox="0 0 16 16"><rect width="15" height="15" rx="6" fill="#d0d0d0"/><path d="M7 6q-4-1.500-4 1.500T7 9M12 6q-4-1.500-4 1.500T12 9" stroke="#1c1c1c" strokeWidth="1.400" fill="none"/></svg>
                    </Control>
                    <Control $text>1x</Control>
                    <Control aria-label="Settings">
                        <svg width="15" height="15" viewBox="-10 -10 20 20"><Gear fill="#d0d0d0" hole="3" holeFill="#222"/></svg>
                    </Control>
                    <Control aria-label="Exit full screen">
                        <svg width="15" height="15" viewBox="0 0 15 15" fill="#c8c8c8"><path d="M8 7V1l2 2 3-3 2 2-3 3 2 2zM7 8v6l-2-2-3 3-2-2 3-3-2-2z"/></svg>
                    </Control>
                    <Control $apart aria-label="Unreal Engine"><UnrealMark width={16} height={16}/></Control>
                </ControlGroup>
            </Controls>
        </Player>
    );
};

export default () => {
    return (
        <Editor>
            <GlobalStyle/>
            <TitleBar>
                <WindowTabs>
                    <Logo><UnrealMark/></Logo>
                    <WindowTab>Map_FirstHourUMG</WindowTab>
                    <WindowTab $active>
                        <ControllerIcon size={18} tile/>
                        <TabLabel>PC_YourFirstHour*</TabLabel>
                        <Close/>
                    </WindowTab>
                </WindowTabs>
                <WindowButtons>
                    <Tutorial><HatIcon/></Tutorial>
                    <WindowButton $first aria-label="Minimize"><svg width="10" height="8"><path d="M0 4h10v4H0z" fill="#fff"/></svg></WindowButton>
                    <WindowButton aria-label="Restore"><svg width="11" height="11" fill="none" stroke="#fff" strokeWidth="2"><path d="M3 1h7v7M1 4h6v6H1z"/></svg></WindowButton>
                    <WindowButton $wide aria-label="Close"><svg width="11" height="10"><path d="M1 0l9 10M10 0L1 10" stroke="#fff" strokeWidth="3"/></svg></WindowButton>
                </WindowButtons>
            </TitleBar>
            <MenuBar>
                {["File", "Edit", "Asset", "View", "Debug", "Window", "Help"].map(item => (
                    <MenuItem key={item}>{item}</MenuItem>
                ))}
                <ParentClass>Parent class:<a href="#player-controller">Player Controller</a></ParentClass>
            </MenuBar>
            <Workspace>
                <LeftColumn/>
                <CenterColumn/>
                <Column $padding="0 1px 1px 2px">
                    <Dock $grow>
                        <TabStrip $tall><DockTab icon={<DetailsIcon/>} label="Details"/></TabStrip>
                        <Panel/>
                    </Dock>
                </Column>
            </Workspace>
            <BigPlay aria-label="Play video"><svg width="30" height="40" viewBox="0 0 30 40"><path d="M0 0l30 20L0 40z" fill="#f0f0f0"/></svg></BigPlay>
            <Captions><p>In order to do that, we<br/>need a reference to it.</p></Captions>
            <VideoPlayer/>
        </Editor>
    );
};
